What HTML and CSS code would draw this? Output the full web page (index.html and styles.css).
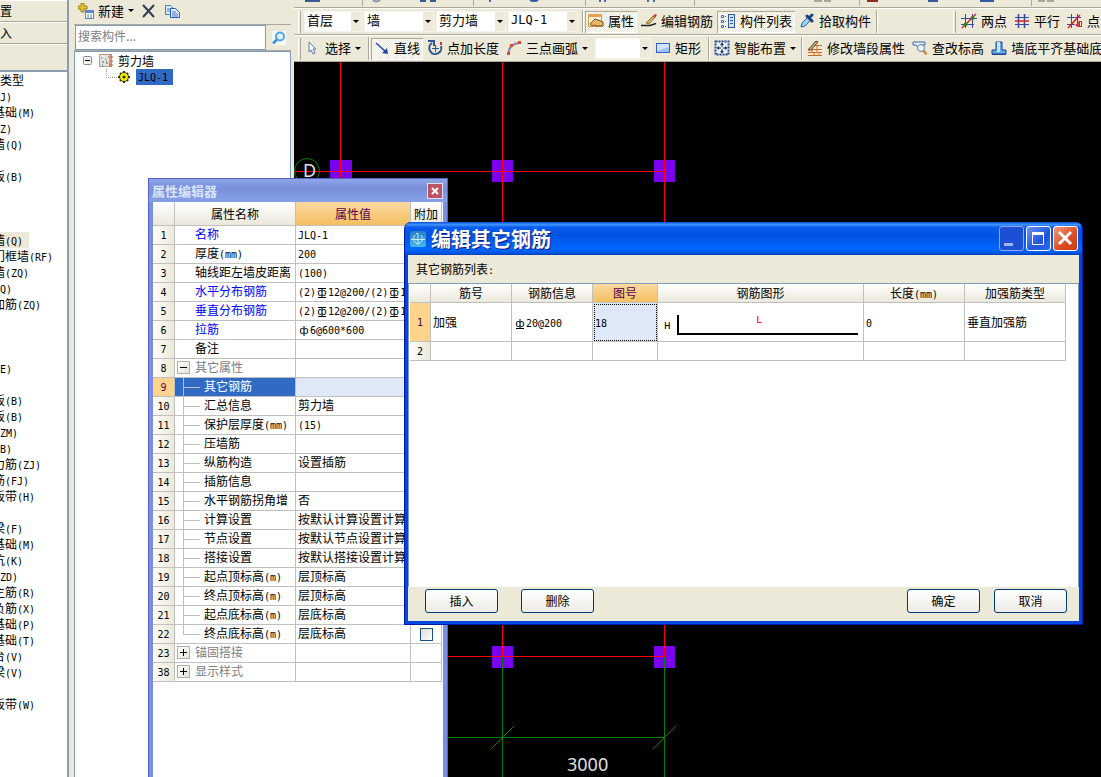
FILE: index.html
```
<!DOCTYPE html>
<html lang="zh-CN">
<head>
<meta charset="utf-8">
<title>编辑其它钢筋</title>
<link rel="stylesheet" href="styles.css">
</head>
<body>
<div class="app">
  <nav class="modules">
    <button class="module-tab">置</button>
    <button class="module-tab">入</button>
    <div class="module-tools"></div>
    <ul class="module-list">
      <li class="group">类型</li>
      <li class="short"><i>J)</i></li>
      <li>基础<i>(M)</i></li>
      <li class="short"><i>Z)</i></li>
      <li>墙<i>(Q)</i></li>
      <li></li>
      <li>板<i>(B)</i></li>
      <li></li><li></li><li></li>
      <li class="current"><span>墙<i>(Q)</i></span></li>
      <li>门框墙<i>(RF)</i></li>
      <li>墙<i>(ZQ)</i></li>
      <li class="short"><i>Q)</i></li>
      <li>加筋<i>(ZQ)</i></li>
      <li></li><li></li><li></li>
      <li class="short"><i>E)</i></li>
      <li></li>
      <li>板<i>(B)</i></li>
      <li>板<i>(B)</i></li>
      <li class="short"><i>ZM)</i></li>
      <li class="short"><i>B)</i></li>
      <li>力筋<i>(ZJ)</i></li>
      <li>筋<i>(FJ)</i></li>
      <li>板带<i>(H)</i></li>
      <li></li>
      <li>梁<i>(F)</i></li>
      <li>基础<i>(M)</i></li>
      <li>坑<i>(K)</i></li>
      <li class="short"><i>ZD)</i></li>
      <li>主筋<i>(R)</i></li>
      <li>负筋<i>(X)</i></li>
      <li>基础<i>(P)</i></li>
      <li>基础<i>(T)</i></li>
      <li>台<i>(V)</i></li>
      <li>梁<i>(V)</i></li>
      <li></li>
      <li>板带<i>(W)</i></li>
    </ul>
  </nav>

  <aside class="components">
    <div class="comp-tools">
      <button class="tool drop">
        <svg width="16" height="16" viewBox="0 0 16 16"><path d="M3 0h3v3h3v3H6v3H3V6H0V3h3z" fill="#e8c22c" stroke="#8a6d10" stroke-width=".8"/><rect x="7.500" y="7.500" width="8" height="8" fill="#fff" stroke="#5c86c8"/><path d="M8 8h7v2H8z" fill="#5c86c8"/><path d="M9 12h2m1 0h2M9 14h2m1 0h2" stroke="#5c86c8"/></svg>
        <span>新建</span></button>
      <button class="tool" aria-label="删除">
        <svg width="16" height="16" viewBox="0 0 16 16"><path d="M2 2l11 12M13 2L2 14" stroke="#333b50" stroke-width="2"/></svg></button>
      <button class="tool" aria-label="复制">
        <svg width="16" height="16" viewBox="0 0 16 16"><path d="M1.500 2.500h5l3 3v6h-8z" fill="#dcebff" stroke="#4a7ccc"/><path d="M3 6h4M3 8h4" stroke="#4a7ccc"/><path d="M6.500 5.500h5l4 4v5h-9z" fill="#dcebff" stroke="#2f5fb0"/><path d="M8 9h4M8 11h6M8 13h6" stroke="#4a7ccc"/></svg></button>
    </div>
    <div class="search">
      <input type="text" placeholder="搜索构件..." aria-label="搜索构件">
      <button aria-label="搜索"><svg width="14" height="14" viewBox="0 0 14 14"><rect width="14" height="14" fill="#f4f9ff"/><circle cx="8" cy="5.500" r="4" fill="#dff1ff" stroke="#55a3e8" stroke-width="2"/><path d="M5 8.500L1 12.500" stroke="#3f8ad8" stroke-width="2.500"/></svg></button>
    </div>
    <div class="tree">
      <div class="tree-row">
        <svg width="35" height="16" viewBox="0 0 35 16"><rect x=".5" y="3.500" width="8" height="8" rx="1" fill="#f0efe8" stroke="#7b8fa8"/><path d="M2 7.500h5" stroke="#000"/><rect x="16.500" y="1.500" width="12" height="12" fill="#e4e4e4" stroke="#b89c90"/><path d="M18 5h1m3 1h1m2-2h1M19 9h2m2 1h2m-6 2h1m3-4h1m2 3h1" stroke="#555"/><path d="M27 1v13M27 4h3M27 8h3M27 12h3" stroke="#c55a28"/></svg>
        <span>剪力墙</span>
      </div>
      <div class="tree-row child">
        <svg width="27" height="16" viewBox="0 0 27 16"><path d="M.5 0v8.500H11" fill="none" stroke="#999" stroke-dasharray="1 1"/><path d="M18 2v12M12 8h12M14 4l8 8M22 4l-8 8" stroke="#333000" stroke-width="2"/><circle cx="18" cy="8" r="4.500" fill="#f4ee00" stroke="#333000"/><circle cx="18" cy="8" r="1.500" fill="#333000"/></svg>
        <span class="picked"><i>JLQ-1</i></span>
      </div>
    </div>
  </aside>

  <main class="workspace">
    <div class="strip">
      <svg width="807" height="7" viewBox="0 0 807 7"><path d="M68.500 0v6M179.500 0v6M291.500 0v6M400.500 0v6M565.500 0v6M737.500 0v6" stroke="#aca899"/><path d="M11 1h15M126 1h6M136 1h6" stroke="#3a5a94" stroke-width="2"/><path d="M79 0q3 3 7 0" fill="none" stroke="#8a94a8" stroke-width="2"/><path d="M196 0v2M306 0v2M311 0v2M354 0v2M360 0v2" stroke="#4a68b0" stroke-width="2"/><path d="M236 0q4 2 8 0M634 1h10M686 1h14" fill="none" stroke="#3358a0" stroke-width="2"/><path d="M573 1h11" fill="none" stroke="#8b3020" stroke-width="2"/><path d="M520 1h8m2 0h7M744 1h7m2 0h7" stroke="#aaa89c" stroke-width="2"/></svg>
    </div>
    <div class="bar">
      <span class="grip"></span>
      <span class="combo short"><select aria-label="楼层"><option>首层</option></select></span>
      <span class="combo"><select aria-label="构件大类"><option>墙</option></select></span>
      <span class="combo"><select aria-label="构件类型"><option>剪力墙</option></select></span>
      <span class="combo mono"><select aria-label="构件"><option>JLQ-1</option></select></span>
      <span class="sep tight"></span>
      <button class="tool on"><svg width="16" height="16" viewBox="0 0 16 16"><rect x=".5" y="1.500" width="13" height="12" fill="#fdf3dc" stroke="#d99a3c"/><path d="M0 1h14v3H0z" fill="#eba04a"/><path d="M2 11l5-5 3 1 5 2v4H9l-3-1-2 1z" fill="#e9b96a" stroke="#70501c"/></svg><span>属性</span></button>
      <button class="tool"><svg width="16" height="16" viewBox="0 0 16 16"><path d="M0 12.500h9l6-2" fill="none" stroke="#222" stroke-width="1.500"/><path d="M5 10l7-7 2 1-6 7z" fill="#d8ae5c" stroke="#775020" stroke-width=".7"/><path d="M12 3l2-2 2 1-2 3z" fill="#cc3d36"/></svg><span>编辑钢筋</span></button>
      <button class="tool on"><svg width="16" height="16" viewBox="0 0 16 16"><path d="M1.500 2.500h2v2h-2zm0 5h2v2h-2zm0 5h2v2h-2z" fill="#fff" stroke="#3c68b0"/><path d="M5 3.500h2M5 8.500h2M5 13.500h2" stroke="#3c68b0" stroke-dasharray="1 1"/><rect x="8.500" y="1.500" width="6" height="13" fill="#cfe2ff" stroke="#2f5aa6"/><path d="M10 4.500h3m-3 3h3m-3 3h3" stroke="#2f5aa6"/></svg><span>构件列表</span></button>
      <button class="tool"><svg width="16" height="16" viewBox="0 0 16 16"><path d="M2 14l1-4 6-6 3 3-6 6z" fill="#9fd0f5" stroke="#2464a8"/><path d="M8 3l5 5M10 5l3-3" stroke="#1b3f80" stroke-width="3" stroke-linecap="round"/></svg><span>拾取构件</span></button>
      <span class="sep tight"></span>
      <span class="bar-gap"></span>
      <span class="grip second"></span>
      <button class="tool"><svg width="16" height="16" viewBox="0 0 16 16"><path d="M4.500 1v14M11.500 1v14M0 5.500h16M0 11.500h13" stroke="#3548a8"/><path d="M1 15L15 1" stroke="#d82020" stroke-width="1.500"/><circle cx="4.500" cy="11.500" r="2" fill="#3a7a20"/><circle cx="11.500" cy="5" r="2" fill="#3a7a20"/></svg><span>两点</span></button>
      <button class="tool"><svg width="16" height="16" viewBox="0 0 16 16"><path d="M4.500 1v14M10.500 1v14" stroke="#3548a8" stroke-width="1.500"/><path d="M1 4.500h14M1 11.500h14" stroke="#3548a8"/><path d="M1 8h14" stroke="#d82020" stroke-width="1.500"/></svg><span>平行</span></button>
      <button class="tool"><svg width="16" height="16" viewBox="0 0 16 16"><path d="M4.500 1v14M10.500 1v9M0 4.500h14M0 11.500h8" stroke="#3548a8"/><path d="M1 15L13 2M9 13l2-3v4" fill="none" stroke="#d82020" stroke-width="1.500"/><rect x="12.500" y="8.500" width="2" height="5" fill="none" stroke="#d82020"/></svg><span>点角</span></button>
    </div>
    <div class="bar last">
      <span class="grip"></span>
      <button class="tool drop"><svg width="16" height="16" viewBox="0 0 16 16"><path d="M4 2l7 7H8l2 4-2 1-2-4-2 2z" fill="#f2f7ff" stroke="#5c7bb0"/></svg><span>选择</span></button>
      <span class="sep"></span>
      <button class="tool on"><svg width="16" height="16" viewBox="0 0 16 16"><path d="M2 3l10 9" stroke="#23479c" stroke-width="1.500"/><path d="M14 14l-6-1 5-5z" fill="#23479c"/></svg><span>直线</span></button>
      <button class="tool"><svg width="16" height="16" viewBox="0 0 16 16"><path d="M5 3a6 6 0 1 0 9 3" fill="none" stroke="#2d5596" stroke-width="2"/><path d="M1 1h6v5" fill="none" stroke="#2d5596" stroke-width="2"/><path d="M8.500 5v7M5 8.500h7" stroke="#2d5596"/><path d="M13 2h2v3h-2z" fill="#b84048"/></svg><span>点加长度</span></button>
      <button class="tool drop"><svg width="16" height="16" viewBox="0 0 16 16"><path d="M2.500 13Q3 4 13 3" fill="none" stroke="#7888b8" stroke-width="2"/><path d="M1 12h3v3H1zM4 4h3v3H4zM12 1h3v3h-3z" fill="#e0482c"/></svg><span>三点画弧</span></button>
      <span class="combo blank"><select aria-label="画弧参数"><option></option></select></span>
      <button class="tool"><svg width="16" height="16" viewBox="0 0 16 16"><rect x="1.500" y="3.500" width="13" height="9" fill="#9cc2fa" stroke="#2f62c8"/><path d="M2 4h12v3L2 11z" fill="#cfe2ff"/></svg><span>矩形</span></button>
      <span class="sep"></span>
      <button class="tool drop"><svg width="16" height="16" viewBox="0 0 16 16"><rect x="1.500" y="1.500" width="13" height="13" fill="#e8f1ff" stroke="#2b4888" stroke-width="2" stroke-dasharray="2 1"/><path d="M8 3v4M8 13V9M3 8h4M13 8H9" stroke="#14234c"/><path d="M6 5l2-2 2 2zM6 11l2 2 2-2zM5 6L3 8l2 2zM11 6l2 2-2 2z" fill="#14234c"/></svg><span>智能布置</span></button>
      <span class="sep tight"></span>
      <button class="tool"><svg width="16" height="16" viewBox="0 0 16 16"><path d="M1 9h14v6H1z" fill="#ffe6cc"/><path d="M5 5.500h10M1 9.500h14M1 12.500h14M1 15.500h14M5 9v3M10 9v3M7 12v3M12 12v3M10 5v4" stroke="#cf6a2c"/><path d="M1 10L9 1l2 1-7 8z" fill="#d4b070" stroke="#443"/></svg><span>修改墙段属性</span></button>
      <button class="tool"><svg width="16" height="16" viewBox="0 0 16 16"><path d="M1 2h12v3H9L7 9 4 5H1z" fill="#e4edff" stroke="#4466a8"/><circle cx="9" cy="8" r="3.500" fill="#e8f6ff" stroke="#607ca0"/><path d="M11.500 10.500l3 4" stroke="#c8873c" stroke-width="2.500"/></svg><span>查改标高</span></button>
      <button class="tool"><svg width="16" height="16" viewBox="0 0 16 16"><path d="M1 13v-3h4V2h6v8h4v4H1z" fill="#65a9ea" stroke="#16458c"/><path d="M6 2h3v10H6z" fill="#cce5ff"/><path d="M1 14.500h14" stroke="#16458c"/></svg><span>墙底平齐基础底</span></button>
    </div>

    <svg class="drawing" role="img" aria-label="轴网平面图">
      <g fill="#7b00f0"><rect x="36" y="98" width="22" height="22"/><rect x="198" y="98" width="21" height="22"/><rect x="360" y="98" width="21" height="22"/><rect x="198" y="584" width="21" height="22"/><rect x="360" y="584" width="21" height="22"/></g>
      <circle cx="13" cy="109" r="12.500" fill="none" stroke="#008000"/>
      <path d="M46.500 0v595M208.500 0v595M370.500 0v595M0 594.500h370M0 109.500h370" class="axis-red"/>
      <path d="M208.500 595v130M370.500 595v130M0 675.500h370M197 687l23-23M359 687l23-23" class="axis-green"/>
      <text x="9" y="115" class="axis-name">D</text>
      <text x="273" y="709" class="dim">3000</text>
    </svg>
  </main>
</div>

<section class="props">
  <header class="props-title"><h2>属性编辑器</h2><button aria-label="关闭"><svg width="14" height="14" viewBox="0 0 14 14"><path d="M4 4l6 6M10 4l-6 6" stroke="#fff" stroke-width="2"/></svg></button></header>
  <div class="props-body">
  <table class="grid prop-grid">
    <colgroup><col class="p-num"><col class="p-name"><col class="p-val"><col class="p-add"></colgroup>
    <thead><tr><th></th><th>属性名称</th><th class="hot">属性值</th><th>附加</th></tr></thead>
    <tbody>
      <tr><th>1</th><td class="top key">名称</td><td><i>JLQ-1</i></td><td></td></tr>
      <tr><th>2</th><td class="top">厚度<i>(mm)</i></td><td><i>200</i></td><td></td></tr>
      <tr><th>3</th><td class="top">轴线距左墙皮距离</td><td><i>(100)</i></td><td></td></tr>
      <tr><th>4</th><td class="top key">水平分布钢筋</td><td><i>(2)<b class="g3">ф</b>12@200/(2)<b class="g3">ф</b>12@200</i></td><td></td></tr>
      <tr><th>5</th><td class="top key">垂直分布钢筋</td><td><i>(2)<b class="g3">ф</b>12@200/(2)<b class="g3">ф</b>12@200</i></td><td></td></tr>
      <tr><th>6</th><td class="top key">拉筋</td><td><i><b>ф</b>6@600*600</i></td><td></td></tr>
      <tr><th>7</th><td class="top">备注</td><td></td><td></td></tr>
      <tr><th>8</th><td class="fold"><button aria-label="折叠"><svg width="11" height="11" viewBox="0 0 11 11"><path d="M2 5.500h7" stroke="#000"/></svg></button>其它属性</td><td></td><td></td></tr>
      <tr class="active"><th>9</th><td class="sub">其它钢筋</td><td></td><td></td></tr>
      <tr><th>10</th><td class="sub">汇总信息</td><td>剪力墙</td><td></td></tr>
      <tr><th>11</th><td class="sub">保护层厚度<i>(mm)</i></td><td><i>(15)</i></td><td></td></tr>
      <tr><th>12</th><td class="sub">压墙筋</td><td></td><td></td></tr>
      <tr><th>13</th><td class="sub">纵筋构造</td><td>设置插筋</td><td></td></tr>
      <tr><th>14</th><td class="sub">插筋信息</td><td></td><td></td></tr>
      <tr><th>15</th><td class="sub">水平钢筋拐角增</td><td>否</td><td></td></tr>
      <tr><th>16</th><td class="sub">计算设置</td><td>按默认计算设置计算</td><td></td></tr>
      <tr><th>17</th><td class="sub">节点设置</td><td>按默认节点设置计算</td><td></td></tr>
      <tr><th>18</th><td class="sub">搭接设置</td><td>按默认搭接设置计算</td><td></td></tr>
      <tr><th>19</th><td class="sub">起点顶标高<i>(m)</i></td><td>层顶标高</td><td></td></tr>
      <tr><th>20</th><td class="sub">终点顶标高<i>(m)</i></td><td>层顶标高</td><td></td></tr>
      <tr><th>21</th><td class="sub">起点底标高<i>(m)</i></td><td>层底标高</td><td></td></tr>
      <tr><th>22</th><td class="sub end">终点底标高<i>(m)</i></td><td>层底标高</td><td class="check"><input type="checkbox" aria-label="附加"></td></tr>
      <tr><th>23</th><td class="fold"><button aria-label="展开"><svg width="11" height="11" viewBox="0 0 11 11"><path d="M2 5.500h7M5.500 2v7" stroke="#000"/></svg></button>锚固搭接</td><td></td><td></td></tr>
      <tr><th>38</th><td class="fold"><button aria-label="展开"><svg width="11" height="11" viewBox="0 0 11 11"><path d="M2 5.500h7M5.500 2v7" stroke="#000"/></svg></button>显示样式</td><td></td><td></td></tr>
    </tbody>
  </table>
  </div>
</section>

<section class="dialog" role="dialog" aria-labelledby="dlg-title">
  <header class="dialog-title">
    <svg width="16" height="16" viewBox="0 0 16 16"><defs><linearGradient id="logo" x1="0" y1="0" x2="0" y2="1"><stop offset="0" stop-color="#2a7cc8"/><stop offset="1" stop-color="#45b8e8"/></linearGradient></defs><rect width="16" height="16" rx="2" fill="url(#logo)"/><path d="M6 2.500h2v11M1 8.500h14M5 4q-4 6 3 9M11 4q4 6-3 9" fill="none" stroke="#c8ecff"/></svg>
    <h1 id="dlg-title">编辑其它钢筋</h1>
    <div class="caption">
      <button class="min" aria-label="最小化"><svg width="23" height="23" viewBox="0 0 23 23"><path d="M4 17.500h9" stroke="#a0b4f0" stroke-width="3"/></svg></button>
      <button aria-label="最大化"><svg width="23" height="23" viewBox="0 0 23 23"><path d="M5.500 5v12.500h11V5" fill="none" stroke="#fff"/><path d="M5 6.500h12" stroke="#fff" stroke-width="3"/></svg></button>
      <button class="close" aria-label="关闭"><svg width="23" height="23" viewBox="0 0 23 23"><path d="M5 5l12 12M17 5L5 17" stroke="#fff" stroke-width="3"/></svg></button>
    </div>
  </header>
  <p class="dialog-label">其它钢筋列表<i>:</i></p>
  <div class="dialog-list">
    <table class="grid bar-grid">
      <colgroup><col class="b-num"><col class="b-name"><col class="b-name"><col class="b-pic"><col class="b-shape"><col class="b-len"><col class="b-len"></colgroup>
      <thead><tr><th></th><th>筋号</th><th>钢筋信息</th><th class="hot">图号</th><th>钢筋图形</th><th>长度<i>(mm)</i></th><th>加强筋类型</th></tr></thead>
      <tbody>
        <tr class="tall active"><th>1</th><td>加强</td><td><i><b class="g2">ф</b>20@200</i></td><td class="focus"><i>18</i></td>
          <td class="shape"><svg width="205" height="38" viewBox="0 0 205 38"><path d="M20 12v19h180" fill="none" stroke="#000" stroke-width="2"/><text x="6" y="26">H</text><text x="98" y="20" fill="#f00">L</text></svg></td>
          <td><i>0</i></td><td>垂直加强筋</td></tr>
        <tr><th>2</th><td></td><td></td><td></td><td></td><td></td><td></td></tr>
      </tbody>
    </table>
  </div>
  <footer class="dialog-actions">
    <div class="pair"><button>插入</button><button>删除</button></div>
    <div class="pair end"><button>确定</button><button>取消</button></div>
  </footer>
</section>
</body>
</html>
```
FILE: styles.css
```
* { box-sizing: border-box; }
body {
  margin: 0;
  height: 100vh;
  overflow: hidden;
  position: relative;
  background: #ece9d8;
  color: #000;
  font: 12px/16px "Noto Sans CJK SC", sans-serif;
}
button, input, select { font: inherit; color: inherit; }
button { padding: 0; border: 0; background: none; }
i { font: 10px "DejaVu Sans Mono", monospace; }
svg { display: block; flex: none; }
.app { display: flex; height: 100%; }

/* module navigation */
.modules {
  width: 69px;
  flex: none;
  display: flex;
  flex-direction: column;
  overflow: hidden;
  border-right: 2px solid #8c9cb0;
}
.module-tab {
  height: 22px;
  flex: none;
  text-align: left;
  border-bottom: 1px solid #aca899;
  border-top: 1px solid #fff;
}
.module-tools { height: 28px; flex: none; border-bottom: 2px solid #8c9cb0; border-top: 1px solid #fff; }
.module-list {
  flex: 1;
  list-style: none;
  margin: 0;
  padding: 0;
  background: #fff;
  white-space: nowrap;
}
.module-list li { height: 16px; margin-left: -7px; }
.module-list .group, .module-list .short { margin-left: 0; }
.module-list .current span { display: inline-block; background: #ece9d8; padding-right: 6px; }

/* component list */
.components {
  width: 217px;
  flex: none;
  display: flex;
  flex-direction: column;
  margin: 0 3px 0 5px;
}
.comp-tools { height: 25px; display: flex; align-items: center; padding: 0 0 2px 1px; border-bottom: 1px solid #aca899; }
.search { display: flex; height: 26px; border-bottom: 1px solid #aca899; }
.search input { flex: 1; min-width: 0; height: 25px; padding: 0 2px 4px; margin-left: 1px; border: 1px solid #7f9db9; background: #fff; }
.search input::placeholder { color: #808080; opacity: 1; }
.search button { width: 25px; display: flex; align-items: center; justify-content: center; }
.tree { flex: 1; background: #fff; border: 1px solid #7f9db9; border-bottom: 0; padding: 1px 0 0 8px; }
.tree-row { display: flex; align-items: center; height: 16px; }
.tree-row.child { padding-left: 23px; gap: 3px; }
.picked { background: #316ac5; height: 16px; width: 37px; padding-left: 2px; line-height: 14px; }

/* toolbars */
.workspace { flex: 1; min-width: 0; display: flex; flex-direction: column; background: #ece9d8; overflow: hidden; }
.strip { height: 8px; flex: none; overflow: hidden; border-bottom: 1px solid #aca899; }
.bar {
  height: 27px;
  flex: none;
  display: flex;
  align-items: center;
  padding-left: 4px;
  border-top: 1px solid #fff;
  border-bottom: 1px solid #aca899;
  font-size: 13px;
  white-space: nowrap;
}
.bar > * { flex: none; }
.grip { width: 3px; height: 22px; margin-right: 4px; border-left: 1px solid #fff; border-right: 1px solid #aca899; }
.bar.last .grip { margin-right: 1px; }
.sep { width: 2px; height: 23px; margin: 0 1px 0 3px; border-left: 1px solid #aca899; border-right: 1px solid #fff; }
.sep.tight { margin-left: 1px; }
.bar-gap { width: 70px; }
.grip.second { margin: 0 2px 0 4px; }
.tool { display: flex; align-items: center; gap: 4px; height: 22px; padding: 0 3px 1px; margin-right: 1px; font-size: 13px; }
.tool.on {
  background: repeating-conic-gradient(#fff 0 25%, #ece9d8 0 50%) 0 0 / 2px 2px;
  box-shadow: inset 1px 1px #aca899, inset -1px -1px #fff;
}
.drop::after, .combo::after {
  content: "";
  border: 3px solid transparent;
  border-top-color: #000;
  border-bottom: 0;
}
.combo { position: relative; display: flex; width: 68px; height: 19px; margin-right: 4px; background: #fff; }
.combo.short { width: 56px; }
.combo.blank { width: 54px; margin: 0 2px 0 4px; }
.combo select {
  appearance: none;
  width: 100%;
  border: 0;
  border-right: 10px solid #ece9d8;
  outline: 1px solid #f6f4ec;
  background: #fff;
  padding: 0 0 3px 2px;
  font-size: 13px;
}
.combo.mono select { font: 12px "DejaVu Sans Mono", monospace; }
.combo::after { position: absolute; right: 2px; top: 8px; }

/* drawing area */
.drawing { flex: 1; width: 100%; min-height: 0; background: #000; }
.axis-red { fill: none; stroke: #f00; }
.axis-green { fill: none; stroke: #008000; }
.axis-name { font: 18px "Noto Sans", sans-serif; fill: #e0e0e0; }
.dim { font: 18px "Noto Sans", sans-serif; fill: #e0e0e0; }

/* data grids */
.grid { border-collapse: separate; border-spacing: 0; table-layout: fixed; background: #fff; }
.grid th, .grid td {
  padding: 0;
  border-right: 1px solid #c0c0c0;
  border-bottom: 1px solid #c0c0c0;
  font-weight: normal;
  white-space: nowrap;
  overflow: hidden;
  height: 19px;
}
.grid th { background: linear-gradient(#fff, #ebe8db); text-align: center; }
.grid tbody th { font: 10px "DejaVu Sans Mono", monospace; background: linear-gradient(90deg, #fdfdfb, #ece9d8); }
.grid th.hot { background: linear-gradient(#fbd9a0, #f4bf60); color: #5a0050; }
.grid .active th { background: #ffd48a; color: #5a0050; }
.grid b { display: inline-block; width: 12px; font: 11px/10px "DejaVu Sans", sans-serif; text-align: center; }
.grid .g2, .grid .g3 {
  background: linear-gradient(#000, #000) center bottom / 8px 1px no-repeat;
}
.grid .g3 {
  background: linear-gradient(#000, #000) center bottom / 8px 1px no-repeat, linear-gradient(#000, #000) center top / 8px 1px no-repeat;
}

/* property editor */
.props {
  position: absolute;
  left: 148px;
  top: 178px;
  bottom: 0;
  width: 300px;
  display: flex;
  flex-direction: column;
  background: #7b8fe0;
  border: solid #5260c8;
  border-width: 1px 1px 0;
  padding: 0 4px;
}
.props-title {
  height: 23px;
  margin: 0 -4px;
  padding: 0 5px 0 3px;
  display: flex;
  align-items: center;
  background: linear-gradient(#8ea5e6, #7890dc 40%, #86a0e8);
}
.props-title h2 { flex: 1; margin: 0; font-size: 13px; color: #d8e4fa; }
.props-title button { width: 14px; height: 14px; background: #bc5468; outline: 1px solid #e8dcf0; }
.props-body { flex: 1; background: #fff; }
.prop-grid { width: 289px; }
.p-num { width: 22px; }
.p-name { width: 121px; }
.p-val { width: 115px; }
.p-add { width: 31px; }
.prop-grid thead th { height: 24px; }
.prop-grid td { padding: 0 0 2px 2px; line-height: 16px; }
.prop-grid td.top { padding-left: 20px; }
.prop-grid td.sub {
  padding-left: 29px;
  background: linear-gradient(#c0c0c0, #c0c0c0) 8px 0 / 1px 100% no-repeat, linear-gradient(#c0c0c0, #c0c0c0) 8px 9px / 17px 1px no-repeat;
}
.prop-grid td.sub.end { background-size: 1px 10px, 17px 1px; }
.key { color: #00f; }
.fold { color: #808080; }
.fold button {
  display: inline-block;
  width: 13px;
  height: 13px;
  margin-right: 5px;
  vertical-align: top;
  margin-top: 2px;
  border: 1px solid #b0b0a8;
  background: linear-gradient(135deg, #fff, #e4e2d8);
}
.prop-grid .active td { background-color: #dfe8f6; }
.prop-grid .active td.sub { background-color: #316ac5; color: #fff; }
.prop-grid .check { padding: 0; text-align: center; }
.check input {
  appearance: none;
  display: block;
  width: 13px;
  height: 13px;
  margin: 0 auto;
  border: 1px solid #1c5180;
  background: linear-gradient(135deg, #dcdcd7, #fff);
}

/* dialog */
.dialog {
  position: absolute;
  left: 404px;
  top: 222px;
  width: 679px;
  height: 403px;
  display: flex;
  flex-direction: column;
  padding: 0 3px 3px;
  border: 1px solid #0019a8;
  border-top: 0;
  border-radius: 7px 7px 0 0;
  background: #0046e0;
  overflow: hidden;
}
.dialog-title {
  height: 33px;
  flex: none;
  margin: 0 -3px;
  padding: 0 4px 0 5px;
  display: flex;
  align-items: center;
  gap: 5px;
  background: linear-gradient(#0a4fd8, #3f93ff 8%, #0a5cee 16%, #0052e0 40%, #0066ff 80%, #0060f4 90%, #0040b8);
}
.dialog-title h1 { flex: 1; margin: 0; font-size: 20px; line-height: 24px; color: #fff; text-shadow: 1px 1px #0a1883; }
.caption { display: flex; gap: 2px; }
.caption button { width: 25px; height: 25px; border: 1px solid #fff; border-radius: 3px; background: linear-gradient(135deg, #6e93f6, #1f54e0 60%, #2a6cf0); }
.caption .min { border-color: #8fa8f0; background: #1d4fd4; }
.caption .close { background: linear-gradient(135deg, #f09a80, #dc4a20 60%, #c83c14); }
.dialog-label { margin: 0; height: 28px; padding: 6px 8px 0; background: #ece9d8; }
.dialog-list { flex: 1; background: #fff; border: 1px solid #7f9db9; border-bottom: 0; padding-left: 1px; }
.bar-grid { width: 656px; }
.b-num { width: 21px; }
.b-name { width: 81px; }
.b-pic { width: 65px; }
.b-shape { width: 206px; }
.b-len { width: 101px; }
.bar-grid td { padding: 0 0 1px 2px; }
.bar-grid .tall td { height: 39px; }
.bar-grid td.focus { background: #dfe8f6; outline: 1px dotted #000; outline-offset: -2px; }
.bar-grid td.shape { padding: 0; }
.shape text { font: 11px "Liberation Mono", monospace; }
.dialog-actions { height: 34px; flex: none; display: flex; justify-content: space-between; padding: 2px 12px 0 17px; background: #ece9d8; }
.dialog-actions button {
  width: 73px;
  height: 24px;
  padding-bottom: 1px;
  border: 1px solid #003c74;
  border-radius: 3px;
  background: linear-gradient(#fff, #ecebe6);
}
.pair { display: flex; gap: 23px; }
.pair.end { gap: 14px; }
```
